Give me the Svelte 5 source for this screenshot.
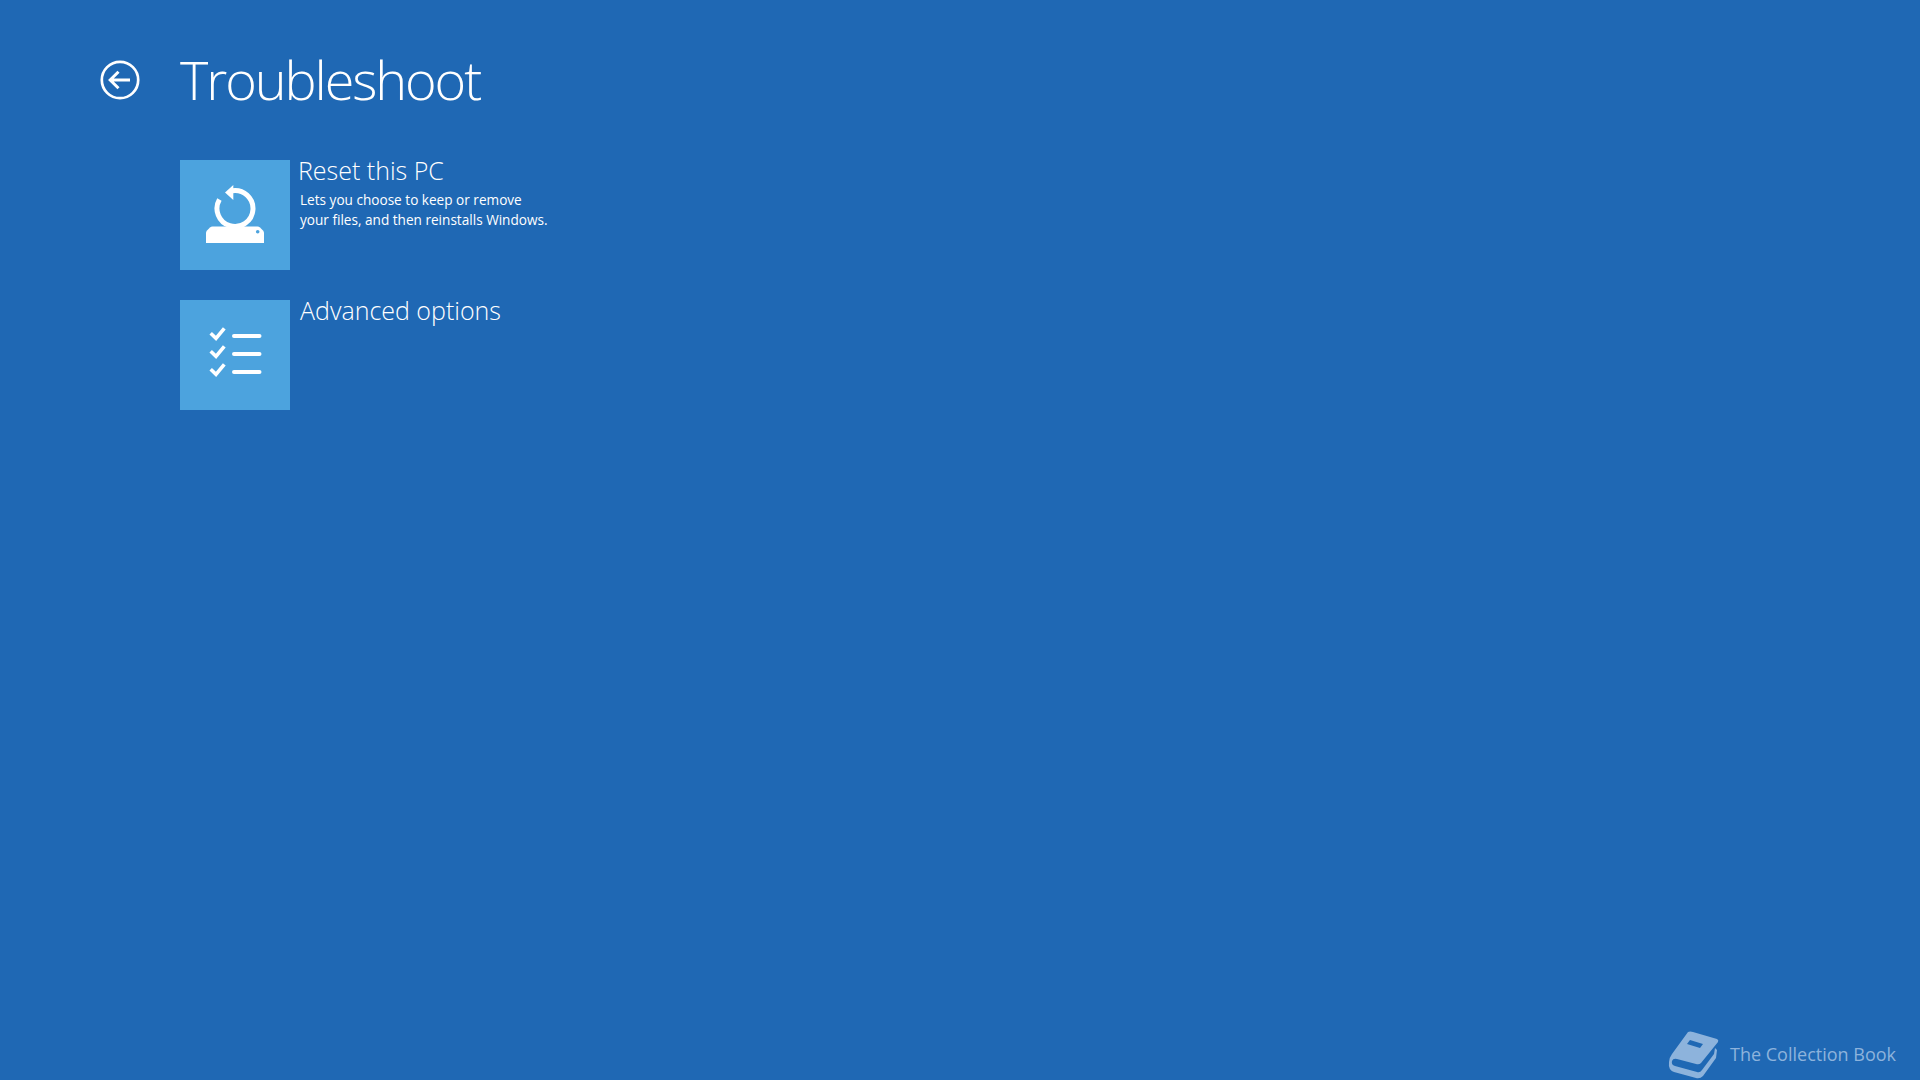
<script>
    const options = [
        { title: 'Reset this PC', lines: ['Lets you choose to keep or remove', 'your files, and then reinstalls Windows.'], icon: 'reset' },
        { title: 'Advanced options', lines: [], icon: 'list' }
    ];
</script>

<main class="page">
    <header class="header">
        <button class="back" aria-label="Back">
            <svg width="42" height="42" viewBox="0 0 42 42" fill="none" stroke="#fff">
                <circle cx="21" cy="21" r="18.200" stroke-width="2.700"/>
                <path d="M31 21H11.500M19.500 12.800L11.200 21l8.300 8.200" stroke-width="3"/>
            </svg>
        </button>
        <h1>Troubleshoot</h1>
    </header>

    <div class="options">
        {#each options as opt}
            <div class="option">
                <div class="tile">
                    {#if opt.icon === 'reset'}
                        <svg width="110" height="110" viewBox="0 0 110 110">
                            <path d="M26 73Q26 71.500 27 70.500L30 67.500Q31 66.500 32.500 66.500H77.500Q79 66.500 80 67.500L83 70.500Q84 71.500 84 73V83H26z" fill="#fff"/>
                            <circle cx="77.700" cy="71.700" r="1.800" fill="#4ca3de"/>
                            <path d="M52 30.750A18 18 0 1 1 39.400 39.500" fill="none" stroke="#fff" stroke-width="5"/>
                            <path d="M53.300 25v15L45 32.500z" fill="#fff"/>
                        </svg>
                    {:else}
                        <svg width="110" height="110" viewBox="0 0 110 110" fill="none" stroke="#fff">
                            <path d="M30.700 33.300l5.300 5 8.300-10M30.700 51.300l5.300 5 8.300-10M30.700 69.300l5.300 5 8.300-10" stroke-width="3.600"/>
                            <path d="M54 36h25.500M54 54h25.500M54 72h25.500" stroke-width="4" stroke-linecap="round"/>
                        </svg>
                    {/if}
                </div>
                <div class="text">
                    <h2>{opt.title}</h2>
                    {#each opt.lines as line}
                        <p>{line}</p>
                    {/each}
                </div>
            </div>
        {/each}
    </div>
</main>

<div class="watermark">
    <svg width="70" height="55" viewBox="0 0 70 55" fill="#8db3dc">
        <path d="M30 7Q32 6 35 7L59 14Q61 15 60 17L43 38Q41 40 38 39L19 34Q15 33 14 36Q13 40 17 41L39 47Q42 48 44 45L56 29 57 23 59 25 58 33 45 51Q42 54 38 53L16 47Q10 45 11 37Q11 33 14 29Z"/>
        <path d="M32 15L45 19 42 23 29 19Z" fill="#1f68b4"/>
    </svg>
    <span>The Collection Book</span>
</div>

<style>
    :global(body) {
        margin: 0;
        background: #1f68b4;
    }

    .page {
        height: 1080px;
        box-sizing: border-box;
        padding: 49px 0 0 99px;
        font-family: "Open Sans", sans-serif;
        color: #fff;
    }

    .header {
        display: flex;
        align-items: center;
        gap: 39px;
    }

    .back {
        display: flex;
        margin-top: 2px;
        padding: 0;
        border: 0;
        background: none;
    }

    h1 {
        margin: 0;
        font-size: 54px;
        font-weight: 300;
        line-height: 60px;
        letter-spacing: -2.1px;
    }

    .options {
        display: flex;
        flex-direction: column;
        gap: 30px;
        margin: 51px 0 0 81px;
    }

    .option {
        display: flex;
        gap: 10px;
    }

    .option:first-child h2 {
        margin-left: -2px;
    }

    .tile {
        width: 110px;
        height: 110px;
        background: #4ca3de;
    }

    .text {
        margin-top: -6.500px;
    }

    h2 {
        margin: 0 0 4px;
        font-size: 25px;
        font-weight: 300;
        line-height: 32px;
    }

    p {
        margin: 0;
        font-size: 13.600px;
        line-height: 20px;
    }

    .watermark {
        position: absolute;
        right: 24px;
        bottom: 0;
        display: flex;
        align-items: center;
        gap: 2px;
        font-family: "Open Sans", sans-serif;
        font-size: 18px;
        color: #8db3dc;
    }

    .watermark span {
        padding-top: 3px;
    }
</style>
